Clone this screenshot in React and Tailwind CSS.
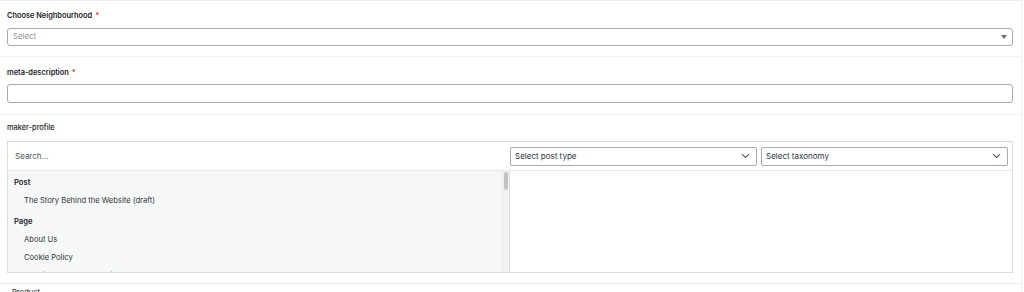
import React from "react";

function Chevron({ className = "" }) {
  return (
    <svg className={className} width="9" height="6" viewBox="0 0 9 6" fill="none">
      <path d="M1 1.2 L4.5 4.5 L8 1.2" stroke="#50575e" strokeWidth="1.1" />
    </svg>
  );
}

function Label({ children, required }) {
  return (
    <div className="h-[12px] leading-[12px] text-[7.4px] font-semibold text-[#1d2327]">
      {children}
      {required && <span className="text-[#d63638] ml-[3px]">*</span>}
    </div>
  );
}

export default function App() {
  return (
    <div className="w-[1024px] h-[292px] overflow-hidden bg-white font-['Inter',sans-serif]">
      <div className="w-[1022px] border-t border-r border-[#ececee]">
        {/* Field 1 */}
        <div className="px-[7px] pt-[9px] pb-[10px] border-b border-[#f0f0f1]">
          <Label required>Choose Neighbourhood</Label>
          <div className="mt-[6px] h-[18px] w-[1006px] border border-[#a7aaad] rounded-[3px] flex items-center justify-between pl-[5px] pr-[5px]">
            <span className="text-[7.8px] text-[#8c8f94]">Select</span>
            <svg width="6" height="4" viewBox="0 0 6 4">
              <path d="M0 0 L6 0 L3 4 Z" fill="#6b6e72" />
            </svg>
          </div>
        </div>
        {/* Field 2 */}
        <div className="px-[7px] pt-[10px] pb-[11px] border-b border-[#f0f0f1]">
          <Label required>meta-description</Label>
          <div className="mt-[5px] h-[19px] w-[1006px] border border-[#a7aaad] rounded-[3px]" />
        </div>
        {/* Field 3 */}
        <div className="px-[7px] pt-[7px] pb-[10px] border-b border-[#ececee]">
          <div className="h-[12px] leading-[12px] text-[7.4px] font-medium text-[#1d2327]">maker-profile</div>
          <div className="mt-[7px] w-[1006px] h-[132px] border border-[#dcdcde] flex flex-col">
            <div className="h-[29px] border-b border-[#e8e8ea] flex items-center">
              <div className="w-[502px] pl-[7px] text-[8px] text-[#50575e]">Search...</div>
              <div className="flex-1 flex gap-[4px] pr-[4px]">
                <div className="flex-1 h-[19px] border border-[#a7aaad] rounded-[2px] flex items-center justify-between pl-[4px] pr-[6px]">
                  <span className="text-[8px] text-[#2c3338]">Select post type</span>
                  <Chevron />
                </div>
                <div className="flex-1 h-[19px] border border-[#a7aaad] rounded-[2px] flex items-center justify-between pl-[4px] pr-[6px]">
                  <span className="text-[8px] text-[#2c3338]">Select taxonomy</span>
                  <Chevron />
                </div>
              </div>
            </div>
            <div className="flex-1 flex min-h-0">
              <div className="w-[502px] bg-[#f6f7f7] border-r border-[#dcdcde] flex overflow-hidden">
                <div className="flex-1 pt-[3px] text-[7.6px] text-[#2c3338]">
                  <div className="h-[18px] leading-[18px] pl-[6px] font-semibold text-[#1d2327]">Post</div>
                  <div className="h-[18px] leading-[18px] pl-[16px]">The Story Behind the Website (draft)</div>
                  <div className="h-[3px]" />
                  <div className="h-[18px] leading-[18px] pl-[6px] font-semibold text-[#1d2327]">Page</div>
                  <div className="h-[18px] leading-[18px] pl-[16px]">About Us</div>
                  <div className="h-[18px] leading-[18px] pl-[16px]">Cookie Policy</div>
                  <div className="h-[18px] leading-[18px] pl-[16px]">Get Listed On Our Website</div>
                </div>
                <div className="w-[7px] bg-[#f3f3f3] border-l border-[#ebebeb] pt-[1px] flex justify-center">
                  <div className="w-[4px] h-[18px] rounded-full bg-[#c2c2c2]" />
                </div>
              </div>
              <div className="flex-1 bg-white" />
            </div>
          </div>
        </div>
        <div className="pl-[12px] pt-[3px] text-[7.6px] text-[#1d2327] leading-[12px]">Product</div>
      </div>
    </div>
  );
}
